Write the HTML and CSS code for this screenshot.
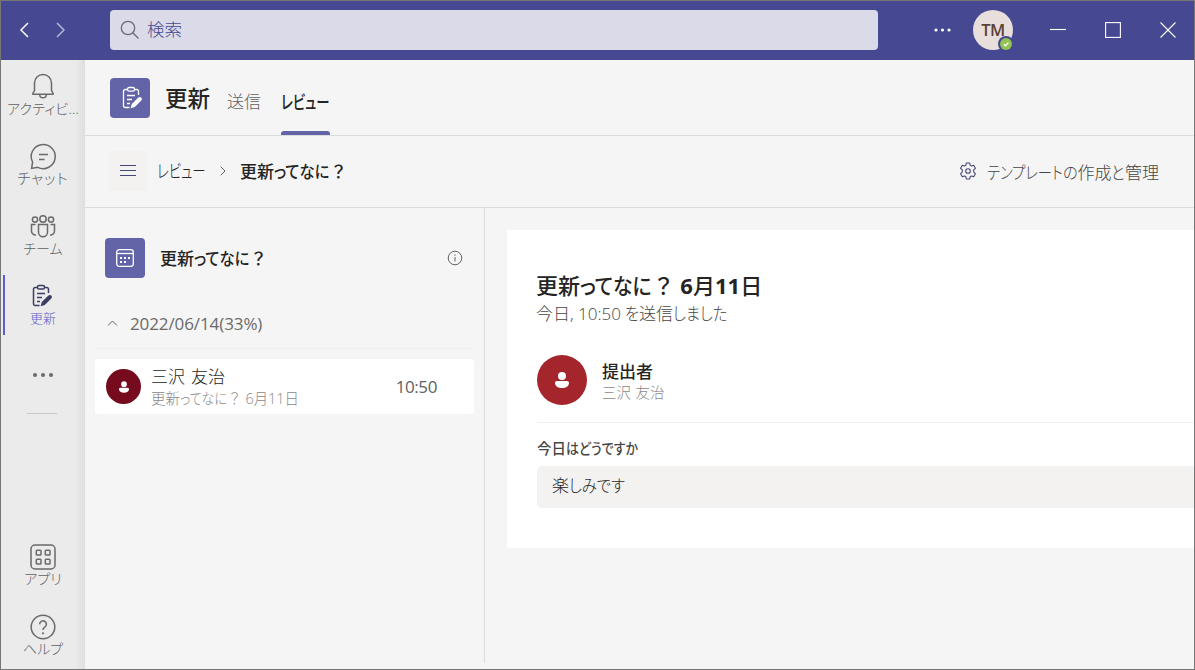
FILE: index.html
```
<!DOCTYPE html>
<html lang="ja">
<head>
  <meta charset="UTF-8" />
  <meta name="viewport" content="width=device-width, initial-scale=1.0" />
  <title>更新 | レビュー</title>
  <link rel="stylesheet" href="styles.css">
</head>
<body>
  <svg class="defs" width="0" height="0">
    <symbol id="clipboard" viewBox="0 0 22 24">
      <path d="M6.500 3.500H4.200A1.700 1.700 0 0 0 2.500 5.200v14.600a1.700 1.700 0 0 0 1.700 1.700h4.300M13.500 3.500h2.300a1.700 1.700 0 0 1 1.700 1.700V9" />
      <rect x="6.500" y="1.500" width="7" height="3.600" rx="1.600" />
      <path d="M6 9.500h8M6 13.500h5M6 17.500h3" />
      <path class="pen" d="M9.600 22.200l1.200-4.200 6.600-6.400a2 2 0 0 1 2.900 2.900l-6.500 6.500z" />
    </symbol>
  </svg>

  <div class="window">
    <header class="titlebar">
      <div class="nav-arrows">
        <svg width="9" height="16" viewBox="0 0 9 16"><path d="M8 1L1 8l7 7" /></svg>
        <svg class="dim" width="9" height="16" viewBox="0 0 9 16"><path d="M1 1l7 7-7 7" /></svg>
      </div>
      <div class="search">
        <svg width="20" height="20" viewBox="0 0 20 20"><circle cx="8" cy="8" r="6.700" /><path d="M12.800 12.800L18.500 18.500" /></svg>
        <span>検索</span>
      </div>
      <svg class="dots" width="18" height="4" viewBox="0 0 18 4"><circle cx="2" cy="2" r="1.600" /><circle cx="8.500" cy="2" r="1.600" /><circle cx="15" cy="2" r="1.600" /></svg>
      <div class="me">
        <span>TM</span>
        <svg class="presence" width="16" height="16" viewBox="0 0 16 16"><circle cx="8" cy="8" r="8" fill="#464991" /><circle cx="8" cy="8" r="6" fill="#92c353" /><path d="M5.700 8.200l1.700 1.600 3-3.200" fill="none" stroke="#fff" stroke-width="1.300" /></svg>
      </div>
      <div class="win-buttons">
        <svg width="16" height="16" viewBox="0 0 16 16"><path d="M0 7.500h16" /></svg>
        <svg width="16" height="16" viewBox="0 0 16 16"><rect x=".6" y=".6" width="14.800" height="14.800" /></svg>
        <svg width="16" height="16" viewBox="0 0 16 16"><path d="M.5.5l15 15M15.500.5l-15 15" /></svg>
      </div>
    </header>

    <div class="body">
      <nav class="rail">
        <a class="rail-item first">
          <svg width="28" height="28" viewBox="0 0 28 28"><path d="M5.500 18.500V11a8.500 8.500 0 0 1 17 0v7.500l1.700 3a.5.5 0 0 1-.5.700H4.300a.5.5 0 0 1-.5-.7z" /><path d="M10.700 22.500a3.300 3.300 0 0 0 6.600 0" /></svg>
          <span>アクティビ...</span>
        </a>
        <a class="rail-item">
          <svg width="28" height="28" viewBox="0 0 28 28"><path d="M2.600 25.400l1-6.200a12 12 0 1 1 5.200 5.100z" /><path d="M10 11.500h9M10 16.500h5.500" /></svg>
          <span class="wide">チャット</span>
        </a>
        <a class="rail-item">
          <svg width="28" height="28" viewBox="0 0 28 28"><circle cx="6" cy="6.500" r="2.600" /><circle cx="14" cy="6" r="3.200" /><circle cx="22" cy="6.500" r="2.600" /><path d="M9.500 11.500h9v7.700a4.500 4.500 0 0 1-9 0z" /><path d="M6.500 11.500h-4v6.500a4 4 0 0 0 4.500 4M21.500 11.500h4v6.500a4 4 0 0 1-4.500 4" /></svg>
          <span>チーム</span>
        </a>
        <a class="rail-item active">
          <svg width="22" height="24"><use href="#clipboard" /></svg>
          <span>更新</span>
        </a>
        <svg class="rail-more" width="22" height="6" viewBox="0 0 22 6"><circle cx="3" cy="3" r="2" /><circle cx="11" cy="3" r="2" /><circle cx="19" cy="3" r="2" /></svg>
        <hr>
        <div class="rail-bottom">
          <a class="rail-item">
            <svg width="28" height="28" viewBox="0 0 28 28"><rect x="2" y="2" width="24" height="24" rx="4" /><rect x="7.300" y="7.300" width="4.700" height="4.700" rx=".8" /><rect x="16.300" y="7.300" width="4.700" height="4.700" rx=".8" /><rect x="7.300" y="16.300" width="4.700" height="4.700" rx=".8" /><rect x="16.300" y="16.300" width="4.700" height="4.700" rx=".8" /></svg>
            <span>アプリ</span>
          </a>
          <a class="rail-item">
            <svg width="28" height="28" viewBox="0 0 28 28"><circle cx="14" cy="14" r="11.800" /><path d="M10.600 11.200a3.400 3.400 0 1 1 5.200 2.900c-1.200.8-1.800 1.500-1.800 3" /><circle class="dot" cx="14" cy="20.300" r="1.100" /></svg>
            <span>ヘルプ</span>
          </a>
        </div>
      </nav>

      <main>
        <div class="app-header">
          <div class="app-icon clip"><svg width="22" height="24"><use href="#clipboard" /></svg></div>
          <h1>更新</h1>
          <a class="tab">送信</a>
          <a class="tab selected"><span class="kana review">レビュー</span></a>
        </div>

        <div class="toolbar">
          <button class="menu"><svg width="16" height="12" viewBox="0 0 16 12"><path d="M0 .5h16M0 5.500h16M0 10.500h16" /></svg></button>
          <span class="crumb"><span class="kana review">レビュー</span></span>
          <svg class="sep" width="6" height="10" viewBox="0 0 6 10"><path d="M.7.700L5 5 .7 9.300" /></svg>
          <strong class="crumb-current">更新<span class="kana tte">ってなに</span><span class="full">？</span></strong>
          <a class="manage">
            <svg width="18" height="18" viewBox="0 0 18 18"><path d="M7.300 1h3.400l.5 2.300 1.300.8 2.200-.8 1.700 3-1.700 1.600v2.200l1.700 1.600-1.700 3-2.200-.8-1.300.8-.5 2.300H7.300l-.5-2.300-1.300-.8-2.200.8-1.700-3 1.700-1.600V7.900L1.600 6.300l1.700-3 2.200.8 1.300-.8z" /><circle cx="9" cy="9" r="2.300" /></svg>
            <span><span class="kana template">テンプレート</span><span class="kana no">の</span>作成<span class="kana to">と</span>管理</span>
          </a>
        </div>

        <div class="panes">
          <section class="list">
            <div class="list-head">
              <div class="app-icon">
                <svg width="20" height="20" viewBox="0 0 20 20"><rect x="1.700" y="1.700" width="16.600" height="16.600" rx="2.500" /><path d="M1.700 5.500h16.600" /><path class="cal-dots" d="M5 10h2M9 10h2M13 10h2M5 14h2M9 14h2" /></svg>
              </div>
              <h2>更新<span class="kana tte">ってなに</span><span class="full">？</span></h2>
              <svg class="info" width="16" height="16" viewBox="0 0 16 16"><circle cx="8" cy="8" r="6.800" /><path d="M8 7v4.500M8 4.500v1.200" /></svg>
            </div>
            <div class="group">
              <svg width="11" height="6" viewBox="0 0 11 6"><path d="M1 5.500l4.500-4.500L10 5.500" /></svg>
              <span>2022/06/14(33%)</span>
            </div>
            <div class="entry">
              <div class="avatar small"><svg width="10" height="12" viewBox="0 0 14 16"><circle cx="7" cy="4" r="4" /><path d="M2 9h10a2 2 0 0 1 2 2c0 3-3 5-7 5s-7-2-7-5a2 2 0 0 1 2-2z" /></svg></div>
              <div class="entry-text">
                <div class="entry-name">三沢 友治</div>
                <div class="entry-sub">更新<span class="kana tte">ってなに</span><span class="full">？</span> 6月11日</div>
              </div>
              <time>10:50</time>
            </div>
          </section>

          <section class="detail">
            <article class="card">
              <h2>更新<span class="kana tte">ってなに</span><span class="full">？</span> <b>6</b>月<b>11</b>日</h2>
              <p class="submitted">今日, 10:50 <span class="kana wo">を</span>送信<span class="kana">しました</span></p>
              <div class="submitter">
                <div class="avatar"><svg width="14" height="16" viewBox="0 0 14 16"><circle cx="7" cy="4" r="4" /><path d="M2 9h10a2 2 0 0 1 2 2c0 3-3 5-7 5s-7-2-7-5a2 2 0 0 1 2-2z" /></svg></div>
                <div>
                  <div class="role">提出者</div>
                  <div class="person">三沢 友治</div>
                </div>
              </div>
              <div class="question">今日<span class="kana">はどうですか</span></div>
              <div class="answer">楽<span class="kana">しみです</span></div>
            </article>
          </section>
        </div>
      </main>
    </div>
  </div>
</body>
</html>
```
FILE: styles.css
```
* {
  box-sizing: border-box;
}
body {
  margin: 0;
  font-family: "Open Sans", "Noto Sans CJK JP", sans-serif;
  font-feature-settings: "palt";
  font-size: 17px;
  font-weight: 300;
  color: #252423;
  white-space: nowrap;
}
h1, h2, p {
  margin: 0;
}
svg {
  fill: none;
  flex: none;
}
.defs {
  position: absolute;
}

/* condensed kana; width is the advance after scaling */
.kana {
  display: inline-block;
  transform: scaleX(.9);
  transform-origin: left;
}
.tte { width: 3.3em; }
.wo { width: .8em; }
.no { width: .87em; }
.to { width: .8em; }
.review {
  width: 49px;
  font-size: 18.5px;
  transform: scaleX(.725);
}
.template {
  width: 4.47em;
  transform: scaleX(.84);
}
.full {
  font-feature-settings: "palt" 0;
}

.window {
  width: 1195px;
  height: 670px;
  border: 1px solid #767676;
  background: #f5f5f5;
  display: flex;
  flex-direction: column;
  overflow: hidden;
}

/* title bar */
.titlebar {
  height: 59px;
  flex: none;
  background: #464991;
  display: flex;
  align-items: center;
  padding: 0 0 1px 19px;
}
.nav-arrows {
  display: flex;
  gap: 27px;
  width: 90px;
}
.nav-arrows svg {
  stroke: #fff;
  stroke-width: 1.5;
}
.nav-arrows .dim {
  opacity: .6;
}
.search {
  width: 768px;
  height: 40px;
  border-radius: 4px;
  background: #dbdae8;
  color: #464991;
  display: flex;
  align-items: center;
  gap: 7px;
  padding: 0 0 1px 10px;
  font-size: 17.5px;
  line-height: 39px;
}
.search svg {
  stroke: #6b6b70;
  stroke-width: 1.3;
}
.dots {
  fill: #fff;
  margin-left: 56px;
}
.me {
  position: relative;
  width: 40px;
  height: 40px;
  margin-left: 21px;
  border-radius: 50%;
  background: #e8dedb;
  color: #5d4037;
  font-size: 16.5px;
  font-weight: 600;
  letter-spacing: -.5px;
  line-height: 40px;
  text-align: center;
}
.presence {
  position: absolute;
  right: -1px;
  bottom: -2px;
}
.win-buttons {
  display: flex;
  gap: 39px;
  margin-left: 37px;
}
.win-buttons svg {
  stroke: #fff;
  stroke-width: 1.1;
}

.body {
  flex: 1;
  display: flex;
  min-height: 0;
}

/* left rail */
.rail {
  width: 84px;
  flex: none;
  display: flex;
  flex-direction: column;
  align-items: center;
  background: linear-gradient(to right, #ebebeb 74px, #dedede 84px);
}
.rail-item {
  position: relative;
  width: 84px;
  height: 70px;
  padding-top: 13px;
  display: flex;
  flex-direction: column;
  align-items: center;
  color: #616161;
  font-size: 14px;
  line-height: 15px;
}
.rail-item.first {
  padding-top: 12px;
  line-height: 18px;
  letter-spacing: .2px;
}
.rail-item svg {
  stroke: #6a6a6a;
  stroke-width: 1.5;
}
.rail-item .dot {
  fill: #6a6a6a;
  stroke: none;
}
.wide {
  font-size: 14.5px;
  letter-spacing: 1px;
}
.rail-item.active {
  color: #5b5fc7;
  font-size: 13px;
  line-height: 17px;
}
.active::before {
  content: "";
  position: absolute;
  left: 2px;
  top: 5px;
  width: 2px;
  height: 60px;
  background: #5b5fc7;
}
.active svg {
  color: #3d3e66;
  stroke: #3d3e66;
  margin: 1px 2px 2px 0;
}
.pen {
  fill: currentColor;
  stroke: none;
}
.rail-more {
  fill: #6a6a6a;
  margin-top: 32px;
}
.rail hr {
  width: 30px;
  margin: 35px 28px 0 26px;
  border: 0;
  border-top: 1px solid #c8c8c8;
}
.rail-bottom {
  margin-top: auto;
  margin-bottom: -1px;
}

main {
  flex: 1;
  min-width: 0;
  display: flex;
  flex-direction: column;
}
.app-header {
  height: 76px;
  flex: none;
  display: flex;
  align-items: center;
  padding-left: 25px;
  border-bottom: 1px solid #dcdcdc;
}
.app-icon {
  width: 40px;
  height: 40px;
  border-radius: 4px;
  background: #6264a7;
  color: #fff;
  display: flex;
  align-items: center;
  justify-content: center;
}
.app-icon svg {
  stroke: #fff;
  stroke-width: 1.3;
}
.clip {
  padding-left: 3px;
}
.app-icon .cal-dots {
  stroke-width: 2;
}
.app-header h1 {
  margin-left: 15px;
  font-size: 22.5px;
  font-weight: 500;
}
.tab {
  position: relative;
  height: 80px;
  margin-left: 17px;
  line-height: 77px;
  padding-top: 5px;
  color: #616161;
}
.selected {
  color: #252423;
  font-weight: 500;
  margin-left: 20px;
}
.selected::after {
  content: "";
  position: absolute;
  left: 0;
  right: 0;
  bottom: 3px;
  height: 4px;
  border-radius: 3px 3px 0 0;
  background: #6264a7;
}

.toolbar {
  height: 72px;
  flex: none;
  display: flex;
  align-items: center;
  padding: 0 35px 1px 23px;
  border-bottom: 1px solid #dcdcdc;
}
.menu {
  width: 40px;
  height: 40px;
  padding: 0;
  border: 0;
  border-radius: 3px;
  background: #f3f2f1;
  display: flex;
  align-items: center;
  justify-content: center;
}
.menu svg {
  stroke: #464775;
}
.crumb {
  margin-left: 9px;
  padding-bottom: 2px;
}
.sep {
  margin: 0 14px;
  stroke: #616161;
}
.crumb-current {
  padding-bottom: 2px;
  font-weight: 500;
}
.manage {
  margin-left: auto;
  display: flex;
  align-items: center;
  gap: 10px;
  color: #484644;
}
.manage svg {
  stroke: #464775;
  stroke-width: 1.1;
  stroke-linejoin: round;
}

.panes {
  flex: 1;
  display: flex;
  min-height: 0;
}

/* submissions list */
.list {
  width: 400px;
  height: 455px;
  flex: none;
  padding: 30px 10px 0;
  border-right: 1px solid #dcdcdc;
}
.list-head {
  display: flex;
  align-items: center;
  padding: 0 11px 0 10px;
}
.list-head h2 {
  margin-left: 15px;
  padding-bottom: 2px;
  font-size: 17px;
  font-weight: 500;
}
.info {
  margin-left: auto;
  stroke: #616161;
}
.group {
  height: 71px;
  padding: 20px 0 0 12px;
  display: flex;
  align-items: center;
  gap: 12px;
  color: #6a6a6a;
  font-weight: 400;
  letter-spacing: -.1px;
  border-bottom: 1px solid #f0f0f0;
}
.group svg {
  stroke: #616161;
}
.entry {
  height: 55px;
  margin-top: 10px;
  padding: 0 37px 0 11px;
  display: flex;
  align-items: center;
  background: #fff;
  border-radius: 3px;
}
.avatar {
  width: 50px;
  height: 50px;
  border-radius: 50%;
  background: #a4262c;
  display: flex;
  align-items: center;
  justify-content: center;
}
.avatar svg {
  fill: #fff;
}
.avatar.small {
  width: 35px;
  height: 35px;
  background: #750b1c;
}
.entry-text {
  margin-left: 10px;
}
.entry-name {
  line-height: 23px;
  word-spacing: 1.5px;
}
.entry-sub {
  font-size: 14.4px;
  line-height: 21px;
  color: #8a8886;
}
.entry time {
  margin-left: auto;
  color: #616161;
  font-weight: 400;
  letter-spacing: -.4px;
}

/* submission detail */
.detail {
  flex: 1;
  min-width: 0;
  padding: 22px 0 0 22px;
}
.card {
  height: 318px;
  padding: 41px 0 0 30px;
  background: #fff;
}
.card h2 {
  margin-left: -1px;
  font-size: 22px;
  font-weight: 500;
  line-height: 28px;
}
.card b {
  font-weight: 700;
}
.submitted {
  margin-left: -1px;
  padding-top: 2px;
  line-height: 26px;
  color: #484644;
}
.submitter {
  height: 96px;
  padding-top: 28px;
  display: flex;
  gap: 15px;
  border-bottom: 1px solid #f0f0f0;
}
.role {
  padding-top: 5px;
  font-weight: 500;
  line-height: 23px;
}
.person {
  font-size: 14.4px;
  line-height: 20px;
  word-spacing: 1px;
  color: #8a8886;
}
.question {
  padding-top: 15px;
  font-size: 14.4px;
  font-weight: 500;
  line-height: 22px;
  color: #484644;
}
.answer {
  height: 42px;
  margin-top: 6px;
  padding-left: 15px;
  line-height: 39px;
  background: #f3f2f1;
  border-radius: 5px 0 0 5px;
}
```
